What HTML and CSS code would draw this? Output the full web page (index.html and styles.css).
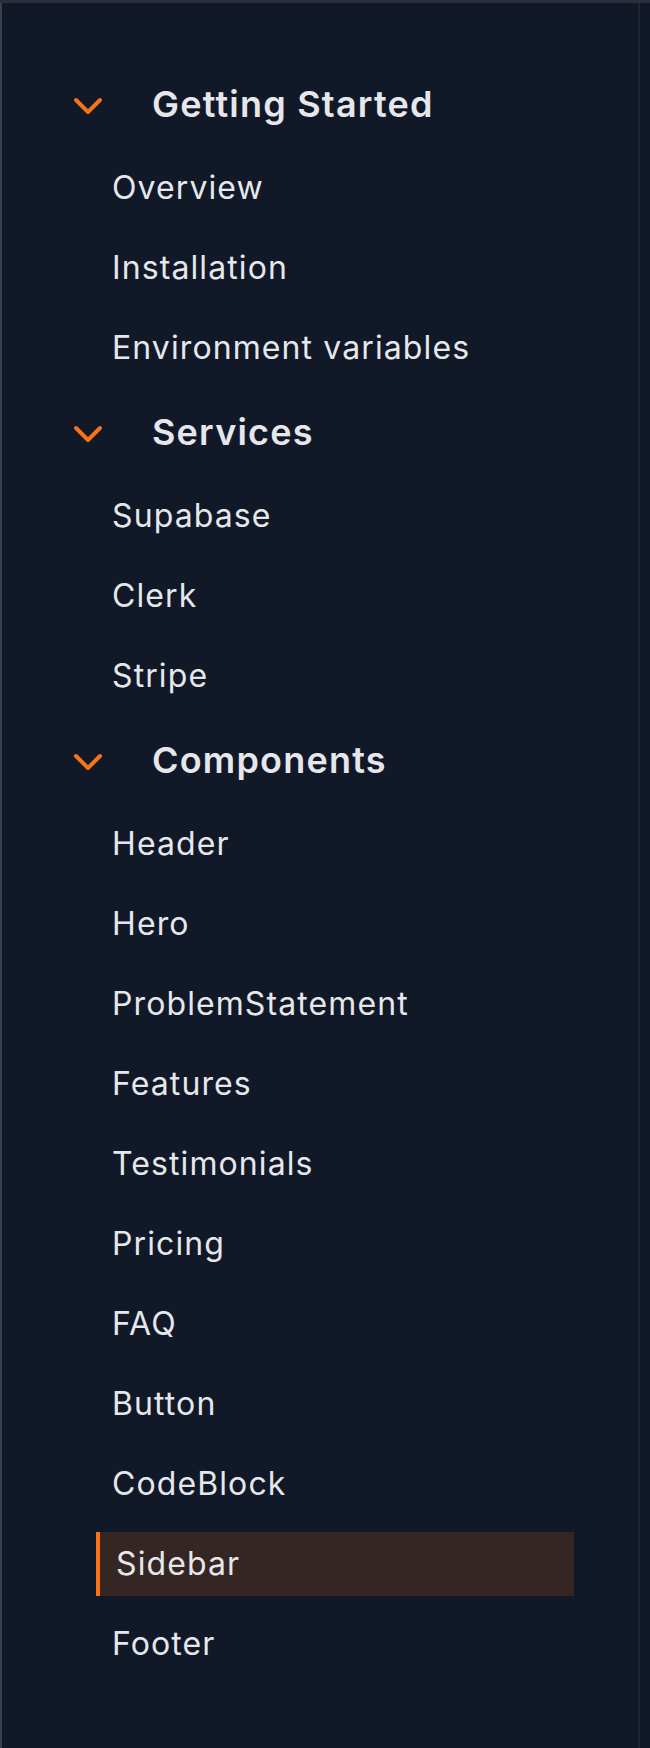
FILE: index.html
```html
<!DOCTYPE html>
<html lang="en">
<head>
<meta charset="utf-8">
<title>Docs Sidebar</title>
<link rel="stylesheet" href="styles.css">
</head>
<body>
<div class="frame">
  <aside class="sidebar">
    <nav class="nav">
      <section class="group">
        <div class="group-head">
          <svg class="chev" viewBox="0 0 24 24" fill="none" stroke="currentColor" stroke-width="2" stroke-linecap="round" stroke-linejoin="round"><path d="m6 9 6 6 6-6"/></svg>
          <span class="group-title">Getting Started</span>
        </div>
        <ul class="items">
          <li class="item">Overview</li>
          <li class="item">Installation</li>
          <li class="item">Environment variables</li>
        </ul>
      </section>
      <section class="group">
        <div class="group-head">
          <svg class="chev" viewBox="0 0 24 24" fill="none" stroke="currentColor" stroke-width="2" stroke-linecap="round" stroke-linejoin="round"><path d="m6 9 6 6 6-6"/></svg>
          <span class="group-title">Services</span>
        </div>
        <ul class="items">
          <li class="item">Supabase</li>
          <li class="item">Clerk</li>
          <li class="item">Stripe</li>
        </ul>
      </section>
      <section class="group">
        <div class="group-head">
          <svg class="chev" viewBox="0 0 24 24" fill="none" stroke="currentColor" stroke-width="2" stroke-linecap="round" stroke-linejoin="round"><path d="m6 9 6 6 6-6"/></svg>
          <span class="group-title">Components</span>
        </div>
        <ul class="items">
          <li class="item">Header</li>
          <li class="item">Hero</li>
          <li class="item">ProblemStatement</li>
          <li class="item">Features</li>
          <li class="item">Testimonials</li>
          <li class="item">Pricing</li>
          <li class="item">FAQ</li>
          <li class="item">Button</li>
          <li class="item">CodeBlock</li>
          <li class="item active">Sidebar</li>
          <li class="item">Footer</li>
        </ul>
      </section>
    </nav>
  </aside>
</div>
</body>
</html>
```

FILE: styles.css
```css
html, body {
  margin: 0;
  padding: 0;
  background: #111827;
}

body {
  font-family: Inter, "Noto Sans", sans-serif;
  color: #e5e7eb;
}

.frame {
  border-top: 3px solid #2a2f3b;
  min-height: 1745px;
  display: flex;
}

.sidebar {
  width: 640px;
  box-sizing: border-box;
  border-left: 2px solid #3a3f4b;
  border-right: 2px solid #1f2531;
  padding: 65px 64px 0 62px;
}

.nav {
  display: flex;
  flex-direction: column;
  gap: 16px;
}

.group-head {
  height: 72px;
  display: flex;
  align-items: center;
  gap: 40px;
}

.chev {
  width: 48px;
  height: 48px;
  color: #f97316;
  flex: none;
  margin-top: 4px;
}

.group-title {
  font-size: 36px;
  font-weight: 600;
  letter-spacing: 1.2px;
}

.items {
  list-style: none;
  margin: 16px 0 0 32px;
  padding: 0;
  display: flex;
  flex-direction: column;
  gap: 16px;
}

.item {
  height: 64px;
  line-height: 64px;
  font-size: 32px;
  letter-spacing: 1.1px;
  padding-left: 16px;
  white-space: nowrap;
}

.item.active {
  border-left: 4px solid #f97316;
  background: #352624;
}
```
